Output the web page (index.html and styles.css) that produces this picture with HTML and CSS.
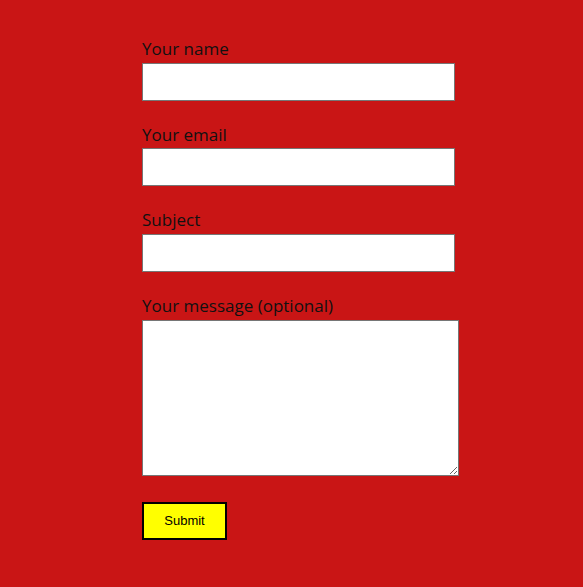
FILE: index.html
```html
<!DOCTYPE html>
<html>
<head>
<meta charset="utf-8">
<link rel="stylesheet" href="styles.css">
</head>
<body>
<form class="contact">
  <div class="field">
    <label class="label" for="name">Your name</label>
    <input class="input" id="name" type="text">
  </div>
  <div class="field">
    <label class="label" for="email">Your email</label>
    <input class="input" id="email" type="email">
  </div>
  <div class="field">
    <label class="label" for="subject">Subject</label>
    <input class="input" id="subject" type="text">
  </div>
  <div class="field">
    <label class="label" for="message">Your message (optional)</label>
    <textarea class="textarea" id="message"></textarea>
  </div>
  <div class="actions">
    <button class="submit" type="submit">Submit</button>
  </div>
</form>
</body>
</html>
```

FILE: styles.css
```css
html, body {
  margin: 0;
  padding: 0;
  background: #c91515;
  height: 100%;
}
.contact {
  display: flex;
  flex-direction: column;
  gap: 24px;
  padding: 39px 0 0 142px;
  font-family: "Open Sans", "Noto Sans", sans-serif;
}
.field {
  display: flex;
  flex-direction: column;
  align-items: flex-start;
}
.label {
  font-size: 17px;
  line-height: 20px;
  padding-bottom: 3.7px;
  color: #111;
}
.input {
  box-sizing: border-box;
  width: 313px;
  height: 38px;
  margin: 0;
  border: 1px solid #767676;
  background: #fff;
  padding: 0 4px;
}
.textarea {
  display: block;
  box-sizing: border-box;
  width: 317px;
  height: 156px;
  margin: 0;
  border: 1px solid #767676;
  background: #fff;
}
.actions {
  padding-top: 2px;
}
.submit {
  display: block;
  box-sizing: border-box;
  width: 85px;
  height: 38px;
  background: #ffff00;
  border: 2px solid #000;
  font-family: "Liberation Sans", Arial, sans-serif;
  font-size: 13px;
  color: #000;
  padding: 0;
}
```
